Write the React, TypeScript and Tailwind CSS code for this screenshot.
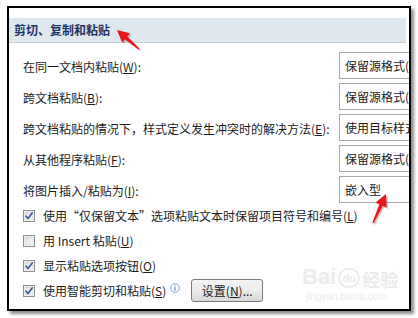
import React from "react";

function Arrow({ tip, tail }: { tip: [number, number]; tail: [number, number] }) {
  const dx = tip[0] - tail[0];
  const dy = tip[1] - tail[1];
  const len = Math.hypot(dx, dy);
  const ux = dx / len;
  const uy = dy / len;
  const nx = -uy;
  const ny = ux;
  const headLen = 12;
  const headW = 6;
  const bx = tip[0] - ux * headLen;
  const by = tip[1] - uy * headLen;
  const pts = [
    [tip[0], tip[1]],
    [bx + nx * headW, by + ny * headW],
    [bx + nx * 1.8, by + ny * 1.8],
    [tail[0] + nx * 0.8, tail[1] + ny * 0.8],
    [tail[0] - nx * 0.8, tail[1] - ny * 0.8],
    [bx - nx * 1.8, by - ny * 1.8],
    [bx - nx * headW, by - ny * headW],
  ]
    .map((p) => p.join(","))
    .join(" ");
  return (
    <g>
      <polygon points={pts} fill="rgba(120,0,0,0.25)" transform="translate(1.5,1.5)" />
      <polygon points={pts} fill="#e8141b" />
    </g>
  );
}

function CheckBox({ checked }: { checked: boolean }) {
  return (
    <svg width="12" height="12" viewBox="0 0 12 12" className="shrink-0">
      <defs>
        <linearGradient id="cbg" x1="0" y1="0" x2="1" y2="1">
          <stop offset="0" stopColor="#dcdcdc" />
          <stop offset="1" stopColor="#fbfbfb" />
        </linearGradient>
      </defs>
      <rect x="0.5" y="0.5" width="11" height="11" fill="#fff" stroke="#8e8f8f" />
      <rect x="2" y="2" width="8" height="8" fill="url(#cbg)" stroke="#c8c8c8" strokeWidth="0.6" />
      {checked && (
        <path d="M3 6.2 L5 8.4 L9.2 3" fill="none" stroke="#3d5b9e" strokeWidth="1.7" strokeLinecap="round" strokeLinejoin="round" />
      )}
    </svg>
  );
}

const rows: { label: React.ReactNode; value: string }[] = [
  { label: <>在同一文档内粘贴(<u>W</u>):</>, value: "保留源格式(默认)" },
  { label: <>跨文档粘贴(<u>B</u>):</>, value: "保留源格式(默认)" },
  { label: <>跨文档粘贴的情况下，样式定义发生冲突时的解决方法(<u>E</u>):</>, value: "使用目标样式(默认)" },
  { label: <>从其他程序粘贴(<u>F</u>):</>, value: "保留源格式(默认)" },
  { label: <>将图片插入/粘贴为(<u>I</u>):</>, value: "嵌入型" },
];

export default function App() {
  return (
    <div
      className="w-[418px] h-[318px] bg-white relative overflow-hidden text-[12px] text-[#1c1c1c]"
      style={{ fontFamily: '"Noto Sans CJK SC", "Noto Sans", sans-serif' }}
    >
      <div className="ml-[7px] mt-[6px] w-[404px] h-[305px] border-2 border-black bg-white relative overflow-hidden shadow-[3px_3px_3px_rgba(0,0,0,0.45)] pt-[10px]">
        <div className="h-[25px] mr-[3px] bg-[#dee6ee] border-b border-[#c6d1db] flex items-center pl-[5px] font-bold text-[#1d3566] leading-none">
          剪切、复制和粘贴
        </div>
        <div className="pt-[9px] flex flex-col gap-[4px]">
          {rows.map((r, i) => (
            <div key={i} className="flex items-center h-[27px]">
              <div className="w-[330px] shrink-0 pl-[14px] whitespace-nowrap leading-none pt-[3px]">{r.label}</div>
              <div className="w-[110px] shrink-0 h-[27px] border border-[#a9a9a9] pl-[5px] flex items-center whitespace-nowrap leading-none">
                {r.value}
              </div>
            </div>
          ))}
        </div>
        <div className="flex flex-col">
          <div className="h-[25px] flex items-center pl-[14px] gap-[8px] whitespace-nowrap leading-none">
            <CheckBox checked />
            <span>使用“仅保留文本”选项粘贴文本时保留项目符号和编号(<u>L</u>)</span>
          </div>
          <div className="h-[25px] flex items-center pl-[14px] gap-[8px] whitespace-nowrap leading-none">
            <CheckBox checked={false} />
            <span>用 Insert 粘贴(<u>U</u>)</span>
          </div>
          <div className="h-[25px] flex items-center pl-[14px] gap-[8px] whitespace-nowrap leading-none">
            <CheckBox checked />
            <span>显示粘贴选项按钮(<u>O</u>)</span>
          </div>
          <div className="h-[25px] flex items-center pl-[14px] gap-[8px] whitespace-nowrap leading-none">
            <CheckBox checked />
            <span>使用智能剪切和粘贴(<u>S</u>)</span>
            <svg width="10" height="10" viewBox="0 0 10 10" className="-ml-[4px] -mt-[5px] shrink-0">
              <circle cx="5" cy="5" r="4.3" fill="#fff" stroke="#6f9fd6" strokeWidth="0.9" />
              <rect x="4.5" y="4.2" width="1" height="3.3" fill="#3b74c4" />
              <rect x="4.5" y="2.4" width="1" height="1" fill="#3b74c4" />
            </svg>
            <div className="ml-[3px] w-[72px] h-[23px] rounded-[3px] border border-[#7a7a7a] bg-gradient-to-b from-[#f4f4f4] via-[#ebebeb] to-[#d8d8d8] flex items-center justify-center leading-none">
              设置(<u>N</u>)...
            </div>
          </div>
        </div>
        <div className="absolute left-[293px] top-[258px] text-[#ececec] leading-none pointer-events-none select-none">
          <div className="flex items-end gap-[2px] text-[22px] font-bold" style={{ fontFamily: '"Liberation Sans", sans-serif' }}>
            <span>Bai</span>
            <span className="w-[22px] h-[20px] rounded-full border-2 border-[#ececec] text-[11px] flex items-center justify-center">du</span>
            <span className="text-[18px]" style={{ fontFamily: '"Noto Sans CJK SC", sans-serif' }}>经验</span>
          </div>
          <div className="text-[10px] mt-[4px] ml-[4px]" style={{ fontFamily: '"Liberation Sans", sans-serif' }}>jingyan.baidu.com</div>
        </div>
      </div>
      <svg className="absolute left-0 top-0 pointer-events-none" width="418" height="318">
        <Arrow tip={[117, 30]} tail={[139, 49]} />
        <Arrow tip={[386, 194]} tail={[373, 223]} />
      </svg>
    </div>
  );
}
